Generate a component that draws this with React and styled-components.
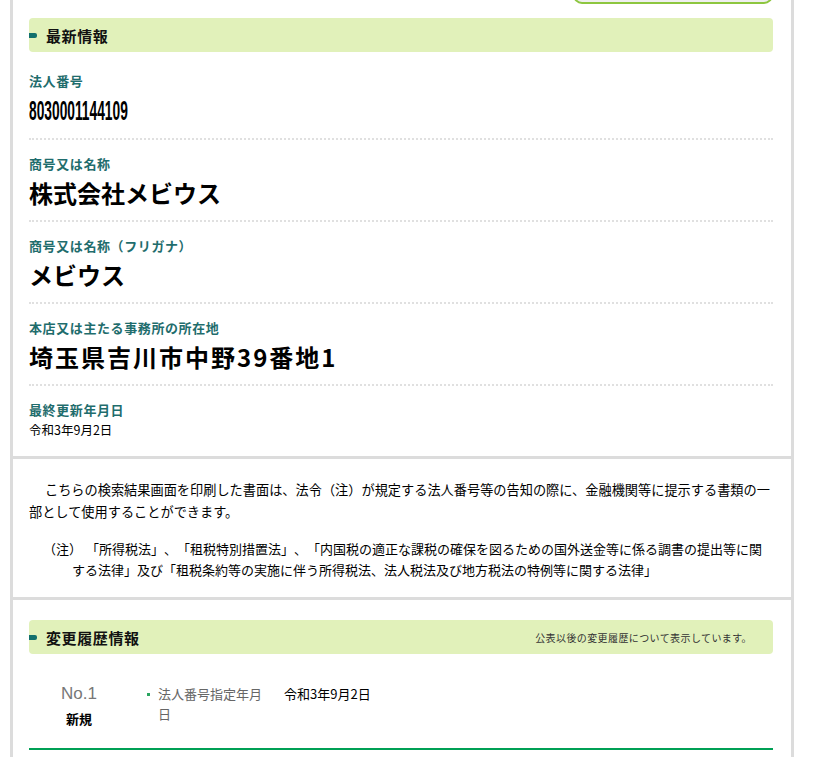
import React from "react";
import styled, { createGlobalStyle } from "styled-components";

const GlobalStyle = createGlobalStyle`
  html, body { margin: 0; padding: 0; background: #fff; }
  body {
    font-family: "Noto Sans CJK JP", "Noto Sans", sans-serif;
    color: #000;
  }
`;

const Page = styled.div`
  box-sizing: border-box;
  width: 784px;
  margin-left: 10px;
  min-height: 757px;
  border-left: 3px solid #dcdcdc;
  border-right: 3px solid #dcdcdc;
  overflow: hidden;
`;

const Section = styled.section`
  padding: ${(p) => p.$pad || "0"} 18px ${(p) => p.$padBottom || "0"} 16px;
  border-bottom: ${(p) => (p.$divider ? "3px solid #dcdcdc" : "none")};
`;

const TopBar = styled.div`
  display: flex;
  justify-content: flex-end;
  height: 18px;
`;

const PrintButton = styled.button`
  box-sizing: border-box;
  width: 200px;
  height: 30px;
  margin-top: -26px;
  border: 2px solid #8dc63f;
  border-radius: 9px;
  background: #efefef;
`;

const Heading = styled.div`
  display: flex;
  align-items: center;
  height: 34px;
  background: #e1f1ba;
  border-radius: 4px;
  margin-bottom: ${(p) => p.$mb || "5px"};
`;

const Marker = styled.span`
  width: 8px;
  height: 5px;
  background: #12706c;
  border-radius: 0 2px 2px 0;
  margin-right: 9px;
`;

const HeadingText = styled.h2`
  margin: 0;
  font-size: 15px;
  font-weight: 700;
  letter-spacing: 0.6px;
  color: #111;
  flex: 1;
`;

const HeadingNote = styled.span`
  font-size: 10px;
  color: #333;
  letter-spacing: 0.4px;
  margin-right: 21px;
`;

const Field = styled.div`
  padding: 16px 0 ${(p) => (p.$last ? "17px" : "12px")};
  border-bottom: ${(p) => (p.$last ? "none" : "2px dotted #e0e0e0")};
`;

const Label = styled.div`
  font-size: 13px;
  line-height: 16px;
  font-weight: 700;
  letter-spacing: 0.6px;
  color: #1f6d6d;
`;

const Value = styled.div`
  margin-top: ${(p) => (p.$small ? "3px" : "6px")};
  font-size: ${(p) => (p.$small ? "12.5px" : "24px")};
  line-height: ${(p) => (p.$small ? "18px" : "30px")};
  font-weight: ${(p) => (p.$small ? 400 : 700)};
  letter-spacing: ${(p) => (p.$spaced ? "2px" : "0")};
`;

const Number = styled.span`
  display: inline-block;
  font-family: "Liberation Sans", "Arial", sans-serif;
  font-size: 27px;
  font-weight: 700;
  transform-origin: left center;
  transform: scaleX(0.51);
`;

const Notice = styled.p`
  margin: 0;
  font-size: 13.2px;
  line-height: 22px;
  text-indent: 16px;
`;

const Note = styled.p`
  margin: 15px 0 0;
  font-size: 13px;
  line-height: 21px;
  padding: 0 8px 0 43px;
  text-indent: -29px;
  text-spacing-trim: space-all;
`;

const NoteMark = styled.span`
  display: inline-block;
  text-indent: 0;
  margin-right: 4px;
`;

const HistoryRow = styled.div`
  display: flex;
  align-items: flex-start;
  padding: 30px 0 20px;
  border-bottom: 2px solid #00a055;
`;

const HistoryNo = styled.div`
  width: 100px;
  display: flex;
  flex-direction: column;
  align-items: center;
`;

const NoText = styled.div`
  font-family: "Liberation Sans", sans-serif;
  font-size: 17px;
  line-height: 20px;
  color: #777;
`;

const Kind = styled.div`
  margin-top: 6px;
  font-size: 13px;
  line-height: 18px;
  font-weight: 700;
`;

const Items = styled.ul`
  list-style: none;
  margin: 0;
  padding: 0 0 0 16px;
`;

const Item = styled.li`
  display: flex;
  font-size: 13px;
  line-height: 20px;
`;

const Bullet = styled.span`
  flex: none;
  width: 3px;
  height: 3px;
  margin: 9px 8px 0 2px;
  background: #2aa560;
`;

const ItemLabel = styled.span`
  width: 108px;
  color: #666;
  margin-right: 18px;
`;

const ItemValue = styled.span`
  color: #000;
`;

export default function App() {
  return (
    <>
      <GlobalStyle />
      <Page>
        <Section $divider>
          <TopBar>
            <PrintButton aria-label="print" />
          </TopBar>
          <Heading>
            <Marker />
            <HeadingText>最新情報</HeadingText>
          </Heading>
          <Field>
            <Label>法人番号</Label>
            <Value><Number>8030001144109</Number></Value>
          </Field>
          <Field>
            <Label>商号又は名称</Label>
            <Value>株式会社メビウス</Value>
          </Field>
          <Field>
            <Label>商号又は名称（フリガナ）</Label>
            <Value>メビウス</Value>
          </Field>
          <Field>
            <Label>本店又は主たる事務所の所在地</Label>
            <Value $spaced>埼玉県吉川市中野39番地1</Value>
          </Field>
          <Field $last>
            <Label>最終更新年月日</Label>
            <Value $small>令和3年9月2日</Value>
          </Field>
        </Section>
        <Section $divider $pad="20px" $padBottom="17px">
          <Notice>
            こちらの検索結果画面を印刷した書面は、法令（注）が規定する法人番号等の告知の際に、金融機関等に提示する書類の一部として使用することができます。
          </Notice>
          <Note>
            <NoteMark>（注）</NoteMark>
            「所得税法」、「租税特別措置法」、「内国税の適正な課税の確保を図るための国外送金等に係る調書の提出等に関する法律」及び「租税条約等の実施に伴う所得税法、法人税法及び地方税法の特例等に関する法律」
          </Note>
        </Section>
        <Section $pad="20px">
          <Heading $mb="0">
            <Marker />
            <HeadingText>変更履歴情報</HeadingText>
            <HeadingNote>公表以後の変更履歴について表示しています。</HeadingNote>
          </Heading>
          <HistoryRow>
            <HistoryNo>
              <NoText>No.1</NoText>
              <Kind>新規</Kind>
            </HistoryNo>
            <Items>
              <Item>
                <Bullet />
                <ItemLabel>法人番号指定年月日</ItemLabel>
                <ItemValue>令和3年9月2日</ItemValue>
              </Item>
            </Items>
          </HistoryRow>
        </Section>
      </Page>
    </>
  );
}
